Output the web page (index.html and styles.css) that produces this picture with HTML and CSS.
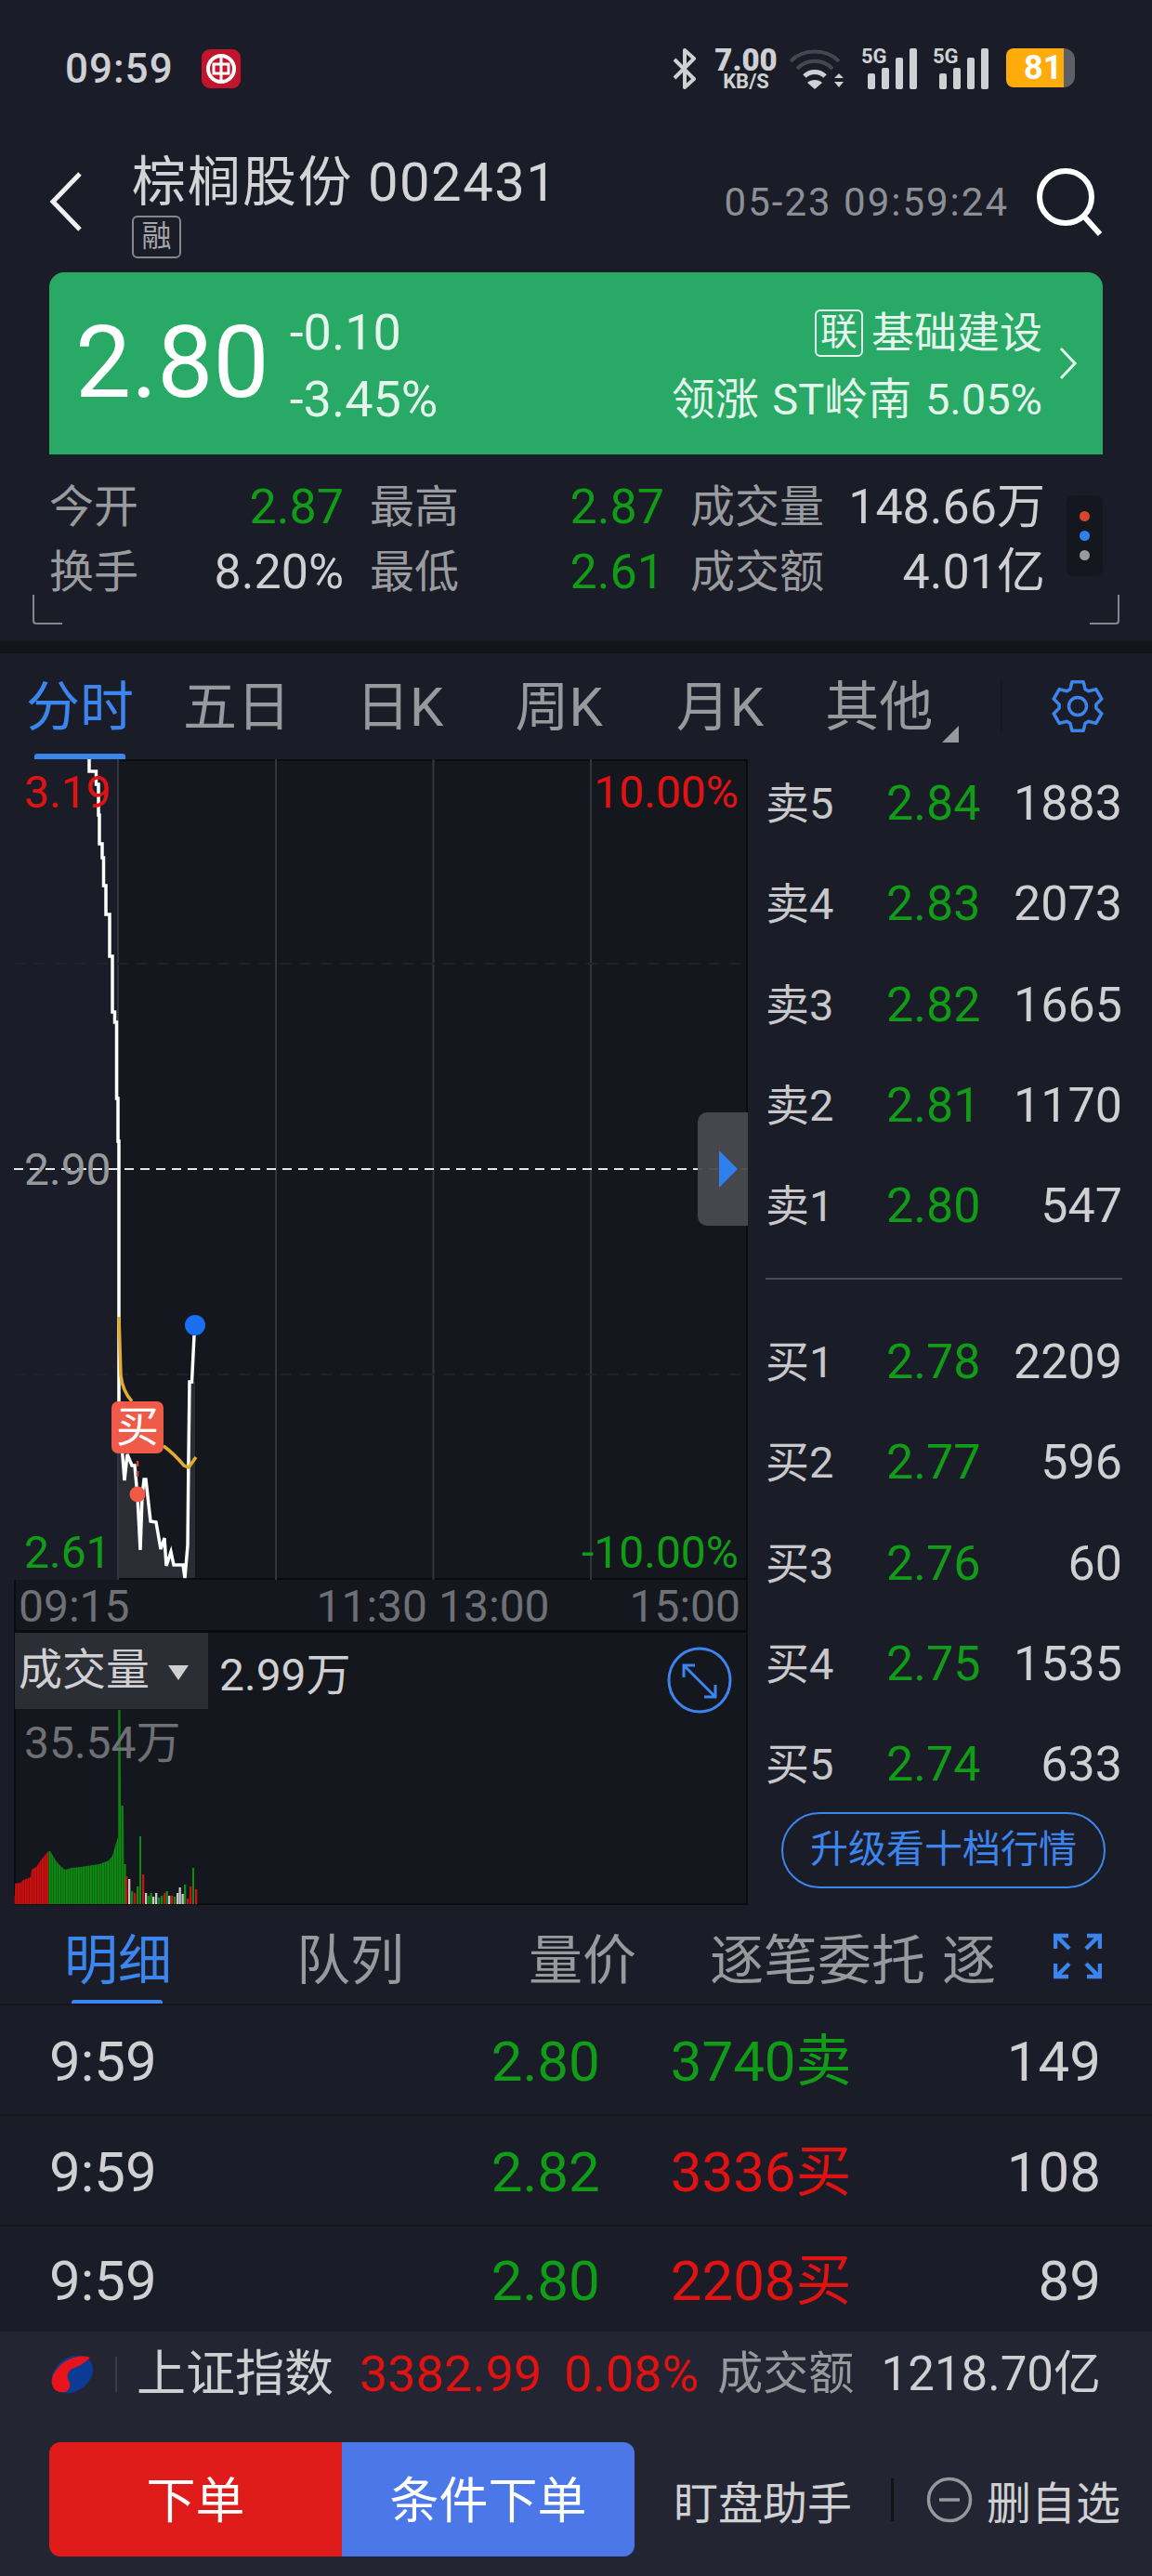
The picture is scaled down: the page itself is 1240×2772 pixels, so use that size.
FILE: index.html
```html
<!DOCTYPE html>
<html lang="zh-CN">
<head>
  <meta charset="UTF-8">
  <title>棕榈股份 002431</title>
  <link rel="stylesheet" href="styles.css">
</head>
<body>

  <div class="status-bar">
    <div class="status-left">
      <span class="clock">09:59</span>
      <svg class="bank-logo" width="42" height="42" viewBox="0 0 42 42">
        <rect width="42" height="42" rx="9" fill="#c2142c"/>
        <circle cx="21" cy="21" r="14" fill="none" stroke="#fff" stroke-width="4"/>
        <rect x="13" y="16" width="16" height="10" fill="none" stroke="#fff" stroke-width="3"/>
        <path d="M21 8v26" stroke="#fff" stroke-width="3"/>
      </svg>
    </div>
    <div class="status-right">
      <svg width="26" height="44" viewBox="0 0 26 44" fill="none" stroke="#cfd0d3" stroke-width="4" stroke-linejoin="round">
        <path d="M2 12l21 21-10 9V2l10 9L2 32"/>
      </svg>
      <div class="speed"><b>7.00</b><i>KB/S</i></div>
      <svg width="62" height="44" viewBox="0 0 62 44" fill="none">
        <path d="M2 14C15 0 41 0 54 14" stroke="#45474e" stroke-width="4"/>
        <path d="M9 22C19 11 37 11 47 22" stroke="#45474e" stroke-width="4"/>
        <path d="M17 30C23 24 33 24 39 30" stroke="#cfd0d3" stroke-width="5"/>
        <path d="M28 44l-8-7c4-4 12-4 16 0z" fill="#cfd0d3"/>
        <path d="M49 32l5-5 5 5zM49 36l5 6 5-6z" fill="#cfd0d3"/>
      </svg>
      <div class="signal">
        <span class="signal-label">5G</span>
        <svg width="54" height="44" viewBox="0 0 54 44" fill="#cfd0d3">
          <rect x="0" y="27" width="8" height="17" rx="2"/><rect x="15" y="21" width="8" height="23" rx="2"/>
          <rect x="30" y="10" width="8" height="34" rx="2"/><rect x="45" y="0" width="8" height="44" rx="2"/>
        </svg>
      </div>
      <div class="signal">
        <span class="signal-label">5G</span>
        <svg width="54" height="44" viewBox="0 0 54 44" fill="#cfd0d3">
          <rect x="0" y="27" width="8" height="17" rx="2"/><rect x="15" y="21" width="8" height="23" rx="2"/>
          <rect x="30" y="10" width="8" height="34" rx="2"/><rect x="45" y="0" width="8" height="44" rx="2"/>
        </svg>
      </div>
      <div class="battery"><span>81</span></div>
    </div>
  </div>

  <div class="title-bar">
    <svg class="back" width="36" height="66" viewBox="0 0 36 66" fill="none" stroke="#f0f0f0" stroke-width="5">
      <path d="M33 3L4 33l29 30"/>
    </svg>
    <div class="title-text">
      <div class="stock-name">棕榈股份 002431</div>
      <span class="rong">融</span>
    </div>
    <div class="stamp">05-23 09:59:24</div>
    <svg class="search" width="72" height="74" viewBox="0 0 72 74" fill="none" stroke="#fff" stroke-width="6">
      <circle cx="32" cy="32" r="28"/>
      <path d="M52 53l17 19"/>
    </svg>
  </div>

  <div class="banner">
    <div class="last-price">2.80</div>
    <div class="change">
      <div>-0.10</div>
      <div>-3.45%</div>
    </div>
    <div class="sector">
      <div class="sector-name"><span class="lian">联</span>基础建设</div>
      <div class="sector-lead">领涨 ST岭南 5.05%</div>
    </div>
    <svg class="banner-arrow" width="20" height="36" viewBox="0 0 20 36" fill="none" stroke="#e4f6ec" stroke-width="3">
      <path d="M2 2l15 16L2 34"/>
    </svg>
  </div>

  <div class="stats">
    <div class="stats-grid">
      <span class="lbl">今开</span><span class="val green">2.87</span>
      <span class="lbl lbl-gap">最高</span><span class="val green">2.87</span>
      <span class="lbl lbl-gap">成交量</span><span class="val">148.66万</span>
      <span class="lbl">换手</span><span class="val">8.20%</span>
      <span class="lbl lbl-gap">最低</span><span class="val green">2.61</span>
      <span class="lbl lbl-gap">成交额</span><span class="val">4.01亿</span>
    </div>
    <div class="dots"><i class="dot-red"></i><i class="dot-blue"></i><i class="dot-gray"></i></div>
    <i class="corner corner-left"></i>
    <i class="corner corner-right"></i>
  </div>

  <div class="tabs">
    <span class="tab active">分时</span>
    <span class="tab">五日</span>
    <span class="tab">日K</span>
    <span class="tab">周K</span>
    <span class="tab">月K</span>
    <span class="tab more">其他</span>
    <i class="tab-line"></i>
    <svg class="gear" width="58" height="56" viewBox="0 0 58 56" fill="none" stroke="#3d85ee" stroke-width="3.500" stroke-linejoin="round">
      <path d="M20.900 9.700L22.900 1.700H35.100L37.100 9.700L40.800 11.800L48.700 9.600L54.800 20.100L48.900 25.900V30.100L54.800 35.900L48.700 46.400L40.800 44.200L37.100 46.300L35.100 54.300H22.900L20.900 46.300L17.200 44.200L9.300 46.400L3.200 35.900L9.100 30.100V25.900L3.200 20.100L9.300 9.600L17.200 11.800Z"/>
      <circle cx="29" cy="28" r="9.500"/>
    </svg>
  </div>

  <div class="main">
    <div class="chart-col">
      <div class="price-chart">
        <svg class="plot" width="790" height="883" viewBox="15 817 790 883" fill="none">
          <rect x="15" y="817" width="112" height="883" fill="#1a1d27"/>
          <path d="M127 817v883M297 817v883M466.500 817v883M636 817v883" stroke="#32343e" stroke-width="2"/>
          <path d="M15 1037h790M15 1479h790" stroke="#202229" stroke-width="2" stroke-dasharray="12 10"/>
          <polygon points="128,1510 132,1567 134,1593 137,1565 142,1577 145,1577 148,1610 151,1668 153,1610 155,1592 157,1592 162,1637 168,1638 173,1667 177,1655 179,1685 184,1670 187,1684 197,1684 199,1698 202,1663 203,1567 204,1487 210,1487 210,1698 128,1698" fill="#2b2d34"/>
          <path d="M15 1258h790" stroke="#e8e8e8" stroke-width="2" stroke-dasharray="10 7"/>
          <path d="M14 815H96V830H103.500V844H106V877H107V908H110V923H111.500V953H114V984H118V1029H121V1089H123.500V1100H125.500V1182H127V1228H128V1510L132 1567 134 1593 137 1565 142 1577 145 1577 148 1610 151 1668 153 1610 155 1592 157 1592 162 1637 168 1638 173 1667 177 1655 179 1685 184 1670 187 1684 197 1684 199 1698 202 1663 203 1567 204 1487H206.500L209 1437" stroke="#fff" stroke-width="3.500"/>
          <path d="M128 1417L130 1480Q132 1497 142 1508M176 1556Q187 1564 198 1577L203 1579 211 1568" stroke="#e0ad30" stroke-width="3.500"/>
          <path d="M148 1572v20" stroke="#c9453a" stroke-width="2.500" stroke-dasharray="6 5"/>
          <circle cx="148" cy="1608" r="8.500" fill="#ef5b48"/>
          <circle cx="210" cy="1426" r="11" fill="#1a6ff0"/>
        </svg>
        <span class="axis-lbl top-left red">3.19</span>
        <span class="axis-lbl top-right red">10.00%</span>
        <span class="axis-lbl mid-left">2.90</span>
        <span class="axis-lbl bot-left green">2.61</span>
        <span class="axis-lbl bot-right green">-10.00%</span>
        <span class="buy-tag">买</span>
        <div class="handle"><i></i></div>
      </div>
      <div class="time-axis">
        <span>09:15</span>
        <span class="noon"><span>11:30</span><span>13:00</span></span>
        <span class="close-time">15:00</span>
      </div>
      <div class="volume">
        <svg class="plot" width="790" height="293" viewBox="15 1757 790 293">
          <defs>
            <pattern id="red-bars" width="2.600" height="10" patternUnits="userSpaceOnUse">
              <rect width="2.600" height="10" fill="#d01010"/><rect width="0.900" height="10" fill="#8e0b0d"/>
            </pattern>
            <pattern id="green-bars" width="2.600" height="10" patternUnits="userSpaceOnUse">
              <rect width="2.600" height="10" fill="#108c15"/><rect width="0.900" height="10" fill="#0a5a0e"/>
            </pattern>
          </defs>
          <rect x="14" y="2040" width="1.500" height="9" fill="#b01212"/>
          <polygon points="16,2049 16,2027 22,2026 25,2023 33,2020 34,2012 40,2008 43,2003 47,1998 52,1992 52,2049" fill="url(#red-bars)"/>
          <polygon points="52,2049 52,1992 54,1992 57,1997 60,2002 65,2008 70,2012 77,2010 87,2009 100,2007 107,2006 117,2002 121,1997 125,1983 127,1977 127,1840 129.500,1840 130,1943 133,1943 133.500,2006 136,2006 136,2049" fill="url(#green-bars)"/>
          <g fill="#d01010">
            <rect x="135" y="2019" width="2.300" height="30"/><rect x="144" y="2037" width="2.300" height="12"/><rect x="153" y="2017" width="2.300" height="32"/><rect x="176" y="2037" width="2.300" height="12"/><rect x="184" y="2040" width="2.300" height="9"/><rect x="201" y="2043" width="2.300" height="6"/><rect x="204" y="2030" width="2.300" height="19"/><rect x="210" y="2033" width="2.300" height="16"/>
          </g>
          <g fill="#118a15">
            <rect x="141" y="2035" width="2.300" height="14"/><rect x="147" y="2030" width="2.300" height="19"/><rect x="150" y="1976" width="2" height="73"/><rect x="159" y="2040" width="2.300" height="9"/><rect x="161.500" y="2037" width="2.300" height="12"/><rect x="170" y="2042" width="2.300" height="7"/><rect x="173" y="2040" width="2.300" height="9"/><rect x="178.500" y="2035" width="2.300" height="14"/><rect x="187" y="2041" width="2.300" height="8"/><rect x="198" y="2028" width="2.300" height="21"/><rect x="207" y="2010" width="2" height="39"/>
          </g>
          <g fill="#c8c8ca">
            <rect x="138" y="2022" width="2.300" height="27"/><rect x="156" y="2037" width="2.300" height="12"/><rect x="164" y="2041" width="2.300" height="8"/><rect x="167" y="2037" width="2.300" height="12"/><rect x="181" y="2040" width="2.300" height="9"/><rect x="190" y="2037" width="2.300" height="12"/><rect x="192.500" y="2031" width="2.300" height="18"/><rect x="195.500" y="2038" width="2.300" height="11"/>
          </g>
        </svg>
        <div class="vol-head">
          <div class="vol-select">成交量<i></i></div>
          <span class="vol-now">2.99万</span>
        </div>
        <span class="vol-max">35.54万</span>
        <svg class="vol-zoom" width="70" height="72" viewBox="0 0 70 72" fill="none" stroke="#3d85ee" stroke-width="3">
          <ellipse cx="35" cy="36" rx="33" ry="34"/>
          <path d="M18 20l34 34M18 33V20h12M52 41v13H40"/>
        </svg>
      </div>
    </div>

    <div class="quotes">
      <div class="quote-group asks">
        <div class="quote"><span>卖5</span><b>2.84</b><em>1883</em></div>
        <div class="quote"><span>卖4</span><b>2.83</b><em>2073</em></div>
        <div class="quote"><span>卖3</span><b>2.82</b><em>1665</em></div>
        <div class="quote"><span>卖2</span><b>2.81</b><em>1170</em></div>
        <div class="quote"><span>卖1</span><b>2.80</b><em>547</em></div>
      </div>
      <div class="quote-line"></div>
      <div class="quote-group bids">
        <div class="quote"><span>买1</span><b>2.78</b><em>2209</em></div>
        <div class="quote"><span>买2</span><b>2.77</b><em>596</em></div>
        <div class="quote"><span>买3</span><b>2.76</b><em>60</em></div>
        <div class="quote"><span>买4</span><b>2.75</b><em>1535</em></div>
        <div class="quote"><span>买5</span><b>2.74</b><em>633</em></div>
      </div>
      <div class="upgrade">升级看十档行情</div>
    </div>
  </div>

  <div class="detail-tabs">
    <div class="detail-scroll">
      <span class="detail-tab active">明细</span>
      <span class="detail-tab">队列</span>
      <span class="detail-tab">量价</span>
      <span class="detail-tab">逐笔委托</span>
      <span class="detail-tab">逐</span>
    </div>
    <svg class="expand" width="52" height="50" viewBox="0 0 52 50" fill="none" stroke="#3d85ee" stroke-width="4.500">
      <path d="M2 17V3h14M3 3l14 14M50 17V3H36M49 3L35 17M2 33v14h14M3 47l14-14M50 33v14H36M49 47L35 33"/>
    </svg>
  </div>

  <div class="trades">
    <div class="trade"><span>9:59</span><span class="green t-price">2.80</span><span class="green t-vol">3740卖</span><span class="t-num">149</span></div>
    <div class="trade"><span>9:59</span><span class="green t-price">2.82</span><span class="red t-vol">3336买</span><span class="t-num">108</span></div>
    <div class="trade"><span>9:59</span><span class="green t-price">2.80</span><span class="red t-vol">2208买</span><span class="t-num">89</span></div>
  </div>

  <div class="footer">
    <div class="index-row">
      <svg width="50" height="42" viewBox="0 0 50 42">
        <ellipse cx="25" cy="21" rx="24" ry="18" transform="rotate(-35 25 21)" fill="#0c3a94"/>
        <path d="M44 3C30-2 12 6 4 22c-3 8-1 16 7 18 9 2 14-6 10-12-3-5-1-12 6-14 6-2 12-6 17-11z" fill="#e8141c"/>
      </svg>
      <i class="index-line"></i>
      <span class="index-name">上证指数</span>
      <span class="red index-val">3382.99</span>
      <span class="red index-pct">0.08%</span>
      <span class="index-lbl">成交额</span>
      <span class="index-amt">1218.70亿</span>
    </div>
    <div class="actions">
      <div class="order-btns">
        <div class="btn btn-red">下单</div>
        <div class="btn btn-blue">条件下单</div>
      </div>
      <span class="action-text helper">盯盘助手</span>
      <i class="action-line"></i>
      <svg width="50" height="50" viewBox="0 0 50 50" fill="none" stroke="#97989c" stroke-width="3.500">
        <circle cx="25" cy="25" r="22.500"/>
        <path d="M14 25h22"/>
      </svg>
      <span class="action-text">删自选</span>
    </div>
  </div>

</body>
</html>
```

FILE: styles.css
```css
* {
  box-sizing: border-box;
}
html, body {
  margin: 0;
  padding: 0;
}
body {
  width: 1240px;
  height: 2772px;
  overflow: hidden;
  background: #1a1d27;
  color: #d0d0d2;
  font-family: Roboto, "Noto Sans CJK SC", sans-serif;
  font-weight: 400;
}

/* status bar */
.status-bar {
  height: 140px;
  padding: 52px 83px 0 70px;
  display: flex;
  justify-content: space-between;
  align-items: flex-start;
}
.status-left {
  display: flex;
  align-items: center;
  gap: 30px;
}
.clock {
  font-size: 44px;
  line-height: 44px;
  font-weight: 500;
  letter-spacing: 1px;
  color: #cfd0d3;
}
.status-right {
  display: flex;
  align-items: flex-start;
  gap: 16px;
}
.speed {
  width: 70px;
  margin: 0 -5px 0 2px;
  color: #cfd0d3;
  text-align: center;
  font-weight: 700;
}
.speed b {
  display: block;
  font-size: 33px;
  line-height: 26px;
}
.speed i {
  display: block;
  font-style: normal;
  font-size: 22px;
  line-height: 20px;
}
.signal {
  position: relative;
  width: 61px;
  display: flex;
  justify-content: flex-end;
}
.signal-label {
  position: absolute;
  left: 0;
  top: -3px;
  font-size: 22px;
  line-height: 24px;
  font-weight: 700;
  color: #cfd0d3;
}
.battery {
  width: 74px;
  height: 42px;
  margin-left: 2px;
  background: linear-gradient(to right, #fdac0b 84%, #5e6066 84%);
  border-radius: 8px 12px 12px 8px;
  color: #fff;
  font-size: 36px;
  line-height: 42px;
  font-weight: 700;
  padding-left: 19px;
}

/* title */
.title-bar {
  height: 153px;
  padding: 20px 53px 0 53px;
  display: flex;
  position: relative;
}
.back {
  margin-top: 24px;
}
.title-text {
  margin-left: 53px;
  flex: 1;
}
.stock-name {
  font-size: 58px;
  line-height: 72px;
  letter-spacing: 1.500px;
  color: #d4d4d6;
}
.rong {
  display: block;
  width: 53px;
  height: 46px;
  border: 2px solid #85868b;
  border-radius: 6px;
  color: #a5a6aa;
  font-size: 32px;
  line-height: 41px;
  text-align: center;
}
.stamp {
  margin-top: 34px;
  font-size: 42px;
  line-height: 48px;
  letter-spacing: 2px;
  color: #8d8f96;
}
.search {
  margin: 20px 0 0 29px;
}

/* price banner */
.banner {
  height: 196px;
  margin: 0 53px;
  padding-left: 28px;
  background: #28a965;
  border-radius: 16px 16px 0 0;
  display: flex;
  position: relative;
  color: #e4f6ec;
}
.last-price {
  margin-top: 37px;
  color: #fff;
  font-size: 107px;
  line-height: 122px;
}
.change {
  margin: 29px 0 0 22px;
  font-size: 54px;
  line-height: 72px;
}
.sector {
  margin: 29px 65px 0 auto;
  text-align: right;
  font-size: 46px;
  line-height: 72px;
}
.sector-name {
  display: flex;
  justify-content: flex-end;
  align-items: center;
  gap: 9px;
}
.sector-lead {
  font-size: 47px;
  word-spacing: 3px;
}
.lian {
  width: 52px;
  height: 51px;
  border: 2px solid #e4f6ec;
  border-radius: 6px;
  font-size: 40px;
  line-height: 46px;
  text-align: center;
}
.banner-arrow {
  position: absolute;
  right: 27px;
  top: 80px;
}

/* open/high/low */
.stats {
  height: 201px;
  position: relative;
  padding: 22px 0 0 53px;
}
.stats-grid {
  display: grid;
  grid-template-columns: 100px 217px 128px 217px 173px 237px;
  grid-auto-rows: 70px;
  align-items: center;
  line-height: 60px;
}
.stats-grid .val {
  text-align: right;
  font-size: 52px;
}
.stats-grid .lbl {
  color: #9a9b9f;
  font-size: 48px;
}
.stats-grid .lbl-gap {
  padding-left: 28px;
}
.green { color: #119c17; }
.red { color: #e01212; }
.stats-grid .green { color: #119c17; }
.dots {
  position: absolute;
  right: 53px;
  top: 44px;
  width: 39px;
  height: 87px;
  background: #15171e;
  border-radius: 8px;
  display: flex;
  flex-direction: column;
  align-items: center;
  justify-content: center;
  gap: 10px;
}
.dots i {
  width: 11px;
  height: 11px;
  border-radius: 50%;
}
.dot-red { background: #d8452e; }
.dot-blue { background: #2f80ed; }
.dot-gray { background: #9a9b9f; }
.corner {
  position: absolute;
  top: 151px;
  width: 32px;
  height: 32px;
  border-bottom: 2px solid #85868b;
}
.corner-left {
  left: 35px;
  border-left: 2px solid #85868b;
  border-bottom-left-radius: 4px;
}
.corner-right {
  right: 35px;
  border-right: 2px solid #85868b;
  border-bottom-right-radius: 4px;
}

/* chart tabs */
.tabs {
  height: 126px;
  border-top: 13px solid #13151b;
  padding: 20px 0 0 28px;
  display: flex;
  align-items: flex-start;
  gap: 72px;
  position: relative;
}
.tab {
  font-size: 58px;
  line-height: 76px;
  color: #98999d;
}
.tab.active {
  color: #3d85ee;
  margin-right: -19px;
  position: relative;
}
.tab.active::after {
  content: "";
  position: absolute;
  left: 9px;
  top: 88px;
  width: 98px;
  height: 6px;
  background: #3d85ee;
  border-radius: 3px 3px 0 0;
}
.tab:nth-child(3) { margin-left: -2px; }
.tab:nth-child(4) { margin-left: 5px; }
.tab:nth-child(5) { margin-left: 7px; }
.more {
  margin-left: -6px;
}
.more::after {
  content: "";
  position: absolute;
  left: 1014px;
  top: 78px;
  border-left: 18px solid transparent;
  border-bottom: 18px solid #98999d;
}
.tab-line {
  position: absolute;
  left: 1077px;
  top: 30px;
  width: 2px;
  height: 54px;
  background: #15171e;
}
.gear {
  position: absolute;
  left: 1131px;
  top: 29px;
}

/* main area */
.main {
  height: 1234px;
  display: flex;
  padding-left: 15px;
}
.chart-col {
  width: 790px;
  height: 1233px;
  margin-top: 1px;
  background: #15171e;
  box-shadow: inset 0 0 0 2px #0b0c10;
}
.price-chart {
  height: 883px;
  position: relative;
  border-bottom: 2px solid #0b0c10;
}
.plot {
  display: block;
  position: absolute;
  left: 0;
  top: 0;
}
.axis-lbl {
  position: absolute;
  font-size: 48px;
  line-height: 50px;
}
.mid-left {
  color: #98999d;
}
.top-left { left: 11px; top: 11px; }
.top-right { right: 10px; top: 11px; }
.mid-left { left: 11px; top: 417px; }
.bot-left { left: 11px; top: 829px; }
.bot-right { right: 10px; top: 829px; }
.buy-tag {
  position: absolute;
  left: 105px;
  top: 691px;
  width: 56px;
  height: 56px;
  background: #ef5b48;
  border-radius: 7px;
  color: #fff;
  font-size: 46px;
  line-height: 54px;
  text-align: center;
}
.handle {
  position: absolute;
  right: 0;
  top: 380px;
  width: 54px;
  height: 122px;
  background: rgba(72, 74, 80, 0.95);
  border-radius: 10px 0 0 10px;
}
.handle i {
  position: absolute;
  left: 23px;
  top: 41px;
  border-left: 20px solid #2f80ed;
  border-top: 20px solid transparent;
  border-bottom: 20px solid transparent;
}
.time-axis {
  height: 57px;
  padding: 0 8px 0 5px;
  display: flex;
  font-size: 48px;
  line-height: 58px;
  color: #6e7075;
  border-bottom: 3px solid #0b0c10;
}
.noon {
  display: flex;
  gap: 12px;
  margin-left: 201px;
}
.close-time {
  margin-left: auto;
}
.volume {
  height: 293px;
  position: relative;
  border-bottom: 2px solid #0b0c10;
}
.vol-head {
  position: relative;
  display: flex;
  align-items: center;
  gap: 12px;
  font-size: 47px;
}
.vol-select {
  width: 208px;
  height: 82px;
  margin-left: 1px;
  padding-left: 4px;
  background: #2c2e35;
  line-height: 80px;
  position: relative;
}
.vol-select i {
  position: absolute;
  left: 165px;
  top: 35px;
  border-top: 16px solid #d0d0d2;
  border-left: 11px solid transparent;
  border-right: 11px solid transparent;
}
.vol-now {
  font-size: 48px;
}
.vol-max {
  position: absolute;
  left: 11px;
  top: 94px;
  font-size: 48px;
  line-height: 50px;
  color: #6e7075;
}
.vol-zoom {
  position: absolute;
  left: 703px;
  top: 15px;
}

/* order book */
.quotes {
  width: 435px;
  padding: 1px 32px 0 19px;
}
.quote-group {
  display: flex;
  flex-direction: column;
  gap: 12.250px;
}
.quote {
  height: 96px;
  display: grid;
  grid-template-columns: 130px 1fr auto;
  align-items: center;
  font-size: 52px;
  line-height: 60px;
}
.quote span {
  font-size: 47px;
  color: #c8c8ca;
}
.quote b {
  font-weight: 400;
  color: #119c17;
}
.quote em {
  font-style: normal;
}
.quote-line {
  height: 2px;
  margin: 29px 0 41px 0;
  background: #494b54;
}
.upgrade {
  width: 349px;
  height: 82px;
  margin: 3px 0 0 17px;
  border: 2px solid #3d85ee;
  border-radius: 41px;
  color: #3d85ee;
  font-size: 41px;
  line-height: 76px;
  text-align: center;
}

/* detail tabs */
.detail-tabs {
  height: 108px;
  border-bottom: 2px solid #13151b;
  position: relative;
}
.detail-scroll {
  width: 1075px;
  height: 106px;
  padding-left: 69px;
  overflow: hidden;
  display: flex;
  white-space: nowrap;
}
.detail-tab {
  flex: none;
  font-size: 58px;
  line-height: 76px;
  margin-top: 22px;
  margin-right: 134px;
  color: #98999d;
}
.detail-tab:nth-child(3) { margin-right: 79px; }
.detail-tab:nth-child(4) { margin-right: 18px; }
.detail-tab:last-child { margin-right: 0; }
.detail-tab.active {
  color: #3d85ee;
  position: relative;
}
.detail-tab.active::after {
  content: "";
  position: absolute;
  left: 8px;
  top: 80px;
  width: 98px;
  height: 6px;
  background: #3d85ee;
  border-radius: 3px 3px 0 0;
}
.expand {
  position: absolute;
  left: 1134px;
  top: 30px;
}

/* trades */
.trades {
  height: 351px;
}
.trade {
  height: 119px;
  padding: 5px 55px 0 53px;
  display: flex;
  align-items: center;
  font-size: 60px;
  line-height: 70px;
  border-bottom: 2px solid #13151b;
}
.trade:last-child {
  height: 113px;
  border-bottom: 0;
}
.t-price { margin-left: 360px; }
.t-vol { margin-left: 76px; }
.t-num { margin-left: auto; }

/* footer */
.footer {
  height: 263px;
  background: #232632;
}
.index-row {
  height: 111px;
  padding: 0 55px 20px 53px;
  display: flex;
  align-items: center;
  line-height: 60px;
}
.index-line {
  width: 2px;
  height: 38px;
  margin: 0 21px 0 21px;
  background: #3a3c47;
}
.index-name {
  font-size: 53px;
}
.index-val {
  margin-left: 28px;
  font-size: 54px;
}
.index-pct {
  margin-left: 24px;
  font-size: 54px;
}
.index-lbl {
  margin-left: 20px;
  color: #98999d;
  font-size: 49px;
}
.index-amt {
  margin-left: auto;
  font-size: 51px;
}
.actions {
  display: flex;
  align-items: center;
  padding: 8px 0 0 53px;
}
.order-btns {
  width: 630px;
  height: 123px;
  display: flex;
  border-radius: 12px;
  overflow: hidden;
}
.btn {
  color: #fff;
  font-size: 53px;
  line-height: 128px;
  text-align: center;
}
.btn-red {
  width: 315px;
  background: #e01c1a;
}
.btn-blue {
  width: 315px;
  background: #4c77e8;
}
.action-text {
  font-size: 48px;
  color: #d0d0d2;
}
.helper {
  margin-left: 42px;
}
.actions > svg {
  margin-right: 15px;
}
.action-line {
  width: 3px;
  height: 46px;
  margin: 0 35px 0 42px;
  background: #111319;
}
```
